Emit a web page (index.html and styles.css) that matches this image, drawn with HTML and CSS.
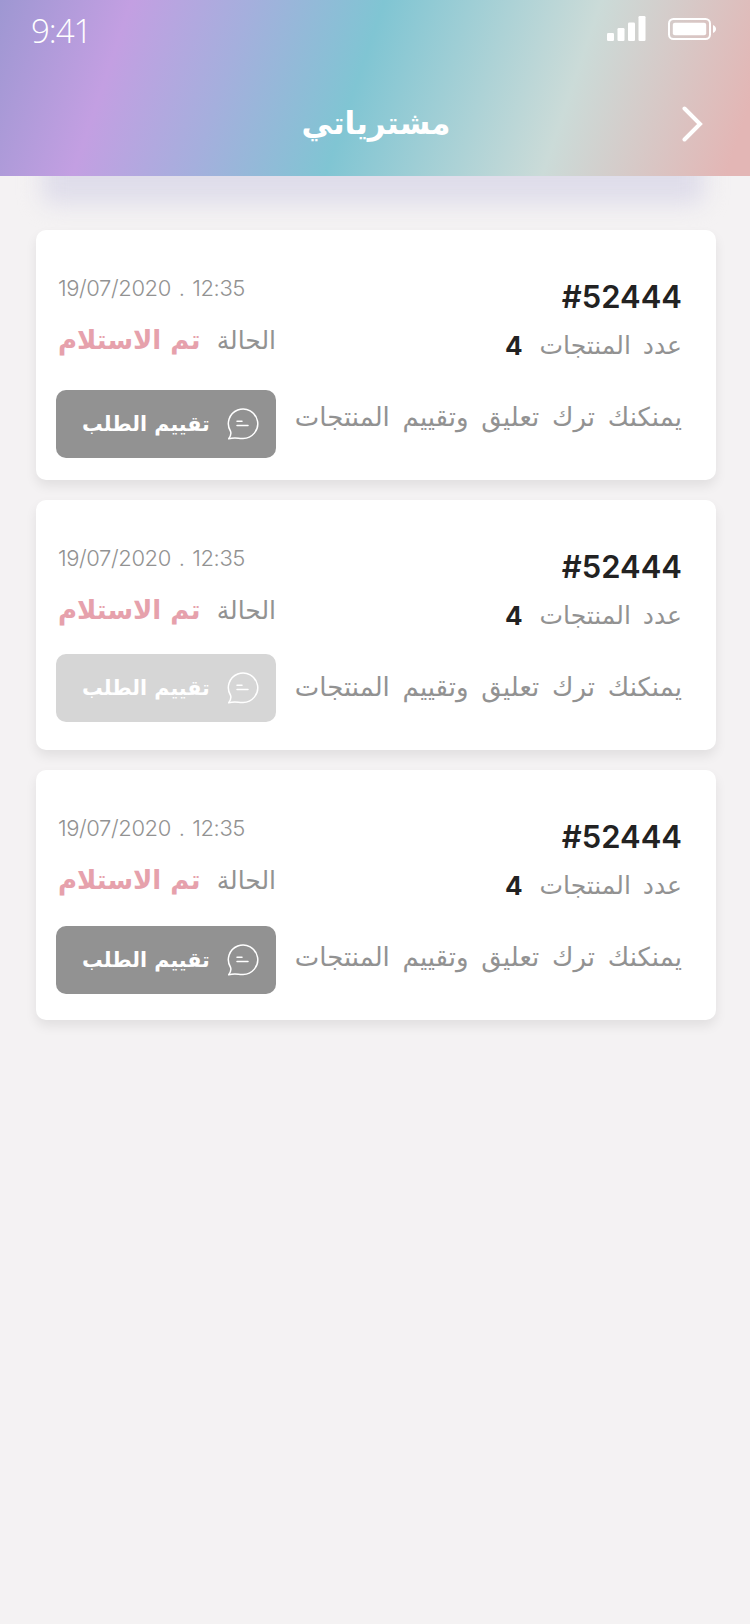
FILE: index.html
```
<!DOCTYPE html>
<html lang="ar" dir="rtl">

<head>
    <meta charset="UTF-8">
    <meta name="viewport" content="width=device-width, initial-scale=1.0">
    <title>مشترياتي</title>
    <link rel="stylesheet" href="styles.css">
</head>

<body>

    <svg class="sprite" width="0" height="0">
        <symbol id="chat" viewBox="0 0 32 32">
            <path d="M1.7 30.7C3.6 28.2 4.3 25.6 3.6 23.5A14.7 14.7 0 1 1 16 30.4C11.5 30.9 9.5 28.8 1.7 30.7Z" />
            <path d="M10 13.2h5M10 17.4h11" />
        </symbol>
    </svg>

    <header>
        <div class="status-bar" dir="ltr">
            <span class="time">9:41</span>
            <svg width="110" height="26" viewBox="0 0 110 26" fill="#fff">
                <rect x="0" y="17" width="7" height="8" rx="1.3" />
                <rect x="10.5" y="12" width="7" height="13" rx="1.3" />
                <rect x="21" y="6.5" width="7" height="18.5" rx="1.3" />
                <rect x="31.5" y="0" width="7" height="25" rx="1.3" />
                <rect x="62" y="3" width="41" height="20" rx="4.5" fill="none" stroke="#fff" stroke-width="2" />
                <rect x="65.8" y="6.8" width="33.4" height="12.4" rx="2" />
                <path d="M106 9c4 1.500 4 6.500 0 8z" />
            </svg>
        </div>
        <div class="title-bar">
            <h1>مشترياتي</h1>
            <svg class="back" width="22" height="36" viewBox="0 0 22 36">
                <path d="M2.500 2.500L18 18L2.500 33.500" />
            </svg>
        </div>
    </header>

    <main>
        <section class="card">
            <div class="order">
                <h2 dir="ltr">#52444</h2>
                <p class="count">عدد المنتجات <b>4</b></p>
                <p class="note">يمنكنك ترك تعليق وتقييم المنتجات</p>
            </div>
            <div class="side">
                <p class="date" dir="ltr">19/07/2020 . 12:35</p>
                <p class="state"><span>الحالة</span><b>تم الاستلام</b></p>
                <button><svg><use href="#chat" /></svg><span>تقييم الطلب</span></button>
            </div>
        </section>

        <section class="card rated">
            <div class="order">
                <h2 dir="ltr">#52444</h2>
                <p class="count">عدد المنتجات <b>4</b></p>
                <p class="note">يمنكنك ترك تعليق وتقييم المنتجات</p>
            </div>
            <div class="side">
                <p class="date" dir="ltr">19/07/2020 . 12:35</p>
                <p class="state"><span>الحالة</span><b>تم الاستلام</b></p>
                <button disabled><svg><use href="#chat" /></svg><span>تقييم الطلب</span></button>
            </div>
        </section>

        <section class="card last">
            <div class="order">
                <h2 dir="ltr">#52444</h2>
                <p class="count">عدد المنتجات <b>4</b></p>
                <p class="note">يمنكنك ترك تعليق وتقييم المنتجات</p>
            </div>
            <div class="side">
                <p class="date" dir="ltr">19/07/2020 . 12:35</p>
                <p class="state"><span>الحالة</span><b>تم الاستلام</b></p>
                <button><svg><use href="#chat" /></svg><span>تقييم الطلب</span></button>
            </div>
        </section>
    </main>

</body>

</html>
```
FILE: styles.css
```
* {
    margin: 0;
    padding: 0;
    box-sizing: border-box;
}

body {
    font-family: "DejaVu Sans", sans-serif;
    min-height: 100vh;
    background-color: #f4f2f3;
    color: #929292;
    white-space: nowrap;
}

.sprite {
    display: none;
}

header {
    position: relative;
    height: 176px;
    background: linear-gradient(108.8deg, #9e97d2 0%, #c39fe2 16.3%, #a5afdd 31%, #80c5d3 47.500%, #cbdbd8 74.3%, #e3b6b5 97%);
    color: white;
}

/* soft shadow under the header */
header::after {
    content: "";
    position: absolute;
    z-index: -1;
    left: 42px;
    right: 46px;
    top: 100px;
    height: 104px;
    border-radius: 10px;
    background-color: #dfddea;
    filter: blur(11px);
}

.status-bar {
    display: flex;
    justify-content: space-between;
    height: 60px;
    padding: 16px 33px 0 31px;
}

.time {
    font-family: "Open Sans", sans-serif;
    font-weight: 350;
    font-size: 33px;
    line-height: 29px;
    letter-spacing: -1px;
}

.title-bar {
    display: grid;
    grid-template-columns: 110px 1fr 110px;
    align-items: center;
    height: 128px;
}

h1 {
    grid-column: 2;
    grid-row: 1;
    text-align: center;
    font-size: 31px;
    line-height: 40px;
    padding: 0 2px 2px 0;
    margin-right: -4px;
}

.back {
    grid-column: 1;
    grid-row: 1;
    margin-right: 46px;
    fill: none;
    stroke: white;
    stroke-width: 4;
    stroke-linecap: round;
}

main {
    display: flex;
    flex-direction: column;
    gap: 20px;
    padding: 54px 34px 0 36px;
}

.card {
    display: flex;
    justify-content: space-between;
    height: 250px;
    padding: 0 34px 0 20px;
    background-color: white;
    border-radius: 10px;
    box-shadow: 0 6px 12px rgba(0, 0, 0, 0.08);
}

.order {
    width: 390px;
    padding-top: 46px;
}

h2 {
    font-family: Inter, sans-serif;
    font-weight: 600;
    font-size: 31px;
    line-height: 42px;
    color: #222;
    text-align: right;
}

.count {
    display: flex;
    gap: 17px;
    font-size: 25px;
    line-height: 56px;
    word-spacing: 4px;
}

.count b {
    font-family: Inter, sans-serif;
    font-size: 26px;
    color: #222;
}

.note {
    font-size: 26px;
    line-height: 40px;
    padding-top: 23px;
    word-spacing: 4.5px;
}

.side {
    width: 220px;
    padding-top: 43px;
}

.date {
    font-family: Inter, sans-serif;
    font-weight: 300;
    font-size: 22px;
    line-height: 30px;
    letter-spacing: -0.4px;
    padding-left: 2px;
    word-spacing: 2px;
}

.state {
    display: flex;
    justify-content: space-between;
    align-items: baseline;
    padding-left: 2px;
    font-size: 25px;
    line-height: 74px;
    height: 74px;
}

.state b {
    font-size: 26px;
    color: #e6a1ac;
}

button {
    display: flex;
    align-items: center;
    justify-content: space-between;
    width: 220px;
    height: 68px;
    margin-top: 13px;
    padding: 0 17px 0 26px;
    border: none;
    border-radius: 10px;
    background-color: #929292;
    color: white;
    font-family: inherit;
    font-size: 20.6px;
    font-weight: bold;
}

button svg {
    width: 32px;
    height: 32px;
    fill: none;
    stroke: white;
    stroke-width: 1.5;
    stroke-linecap: round;
    stroke-linejoin: round;
}

.rated button {
    margin-top: 7px;
    background-color: #d6d6d6;
}

.last button {
    margin-top: 9px;
}
```
